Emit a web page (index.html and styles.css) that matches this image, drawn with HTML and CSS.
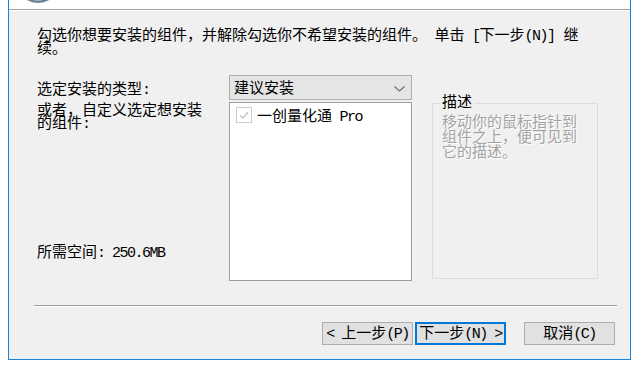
FILE: index.html
```html
<!DOCTYPE html>
<html lang="zh-CN">
<head>
    <meta charset="UTF-8">
    <title>选择组件</title>
    <link rel="stylesheet" href="styles.css">
</head>
<body>

<div class="window">
    <!-- Header strip (mostly cut off) -->
    <div class="header">
        <svg class="logo" width="32" height="4" viewBox="0 0 32 4">
            <ellipse cx="16" cy="-6" rx="15" ry="9" fill="#6d7f92"/>
            <ellipse cx="16" cy="-7" rx="11" ry="8" fill="#9db3c9"/>
        </svg>
    </div>

    <div class="page">
        <p class="intro">勾选你想要安装的组件，并解除勾选你不希望安装的组件。<span class="en"> </span>单击<span class="en"> [</span>下一步<span class="en">(N)]</span> 继<br>续。</p>

        <div class="components">
            <div class="label type-label">选定安装的类型<span class="en">:</span></div>
            <div class="combo">
                <span>建议安装</span>
                <svg class="chevron" width="11" height="6" viewBox="0 0 11 6">
                    <path d="M0.5 0.5 L5.5 5 L10.5 0.5" fill="none" stroke="#6f6f6f" stroke-width="1.2"/>
                </svg>
            </div>

            <div class="left-col">
                <div class="label tight">或者，自定义选定想安装<br>的组件<span class="en">:</span></div>
                <div class="label space">所需空间<span class="en">: 250.6MB</span></div>
            </div>
            <div class="listbox">
                <div class="item">
                    <span class="check">
                        <svg width="12" height="12" viewBox="0 0 12 12">
                            <path d="M2 6.5 L5 9 L10 3" fill="none" stroke="#c4c4c4" stroke-width="1.4"/>
                        </svg>
                    </span>
                    <span class="item-text">一创量化通<span class="en"> Pro</span></span>
                </div>
            </div>

            <fieldset class="desc-box">
                <legend>描述</legend>
                <p class="desc">移动你的鼠标指针到组件之上，便可见到它的描述。</p>
            </fieldset>
        </div>

        <div class="separator"></div>

        <div class="buttons">
            <div class="btn"><span class="en">&lt; </span>上一步<span class="en">(P)</span></div>
            <div class="btn btn-default">下一步<span class="en">(N) &gt;</span></div>
            <div class="btn btn-cancel">取消<span class="en">(C)</span></div>
        </div>
    </div>
</div>

</body>
</html>
```

FILE: styles.css
```css
body {
    margin: 0;
    background: #fff;
    font-family: "Liberation Mono", "Noto Sans CJK SC", monospace;
    font-size: 15px;
    line-height: 15px;
    color: #000;
}

/* half-width latin, like the dialog's bitmap font */
.en {
    letter-spacing: -1.5px;
}

.window {
    box-sizing: border-box;
    margin-left: 8px;
    width: 623px;
    height: 360px;
    border: 1px solid #1883d7;
    border-top: none;
    display: flex;
    flex-direction: column;
}

.header {
    height: 9px;
    background: #fff;
    border-bottom: 1px solid #a0a0a0;
    overflow: hidden;
}

.logo {
    display: block;
    margin-left: 13px;
}

.page {
    flex: 1;
    background: #f0f0f0;
    border-top: 1px solid #fff;
    padding-left: 28px;
}

.intro {
    margin: 19px 0 0;
    line-height: 13px;
}

/* three columns: labels, list, description */
.components {
    display: grid;
    grid-template-columns: 192px 183px 186px;
    grid-template-rows: 25px 179px;
    row-gap: 2px;
    margin-top: 19px;
}

.type-label {
    padding-top: 8px;
}

.combo {
    box-sizing: border-box;
    display: flex;
    justify-content: space-between;
    align-items: flex-start;
    padding: 6px 0 0 4px;
    background: #e5e5e5;
    border: 1px solid #adadad;
}

.chevron {
    margin: 4px 6px 0 0;
}

.left-col {
    display: flex;
    flex-direction: column;
    justify-content: space-between;
    padding: 3px 0 20px;
}

.tight {
    line-height: 13px;
}

.listbox {
    box-sizing: border-box;
    background: #fff;
    border: 1px solid #9d9d9d;
    padding: 4px 6px;
}

.item {
    display: flex;
    align-items: flex-start;
    gap: 5px;
}

.check {
    box-sizing: border-box;
    width: 16px;
    height: 16px;
    border: 1px solid #cccccc;
    background: #fff;
    display: flex;
    align-items: center;
    justify-content: center;
}

.item-text {
    margin-top: 3px;
}

.desc-box {
    grid-column: 3;
    grid-row: 1 / 3;
    margin: 21px 0 2px 20px;
    padding: 0 0 0 7px;
    border: 1px solid #dcdcdc;
    min-width: 0;
}

.desc-box legend {
    padding: 0 2px;
}

.desc {
    margin: 5px 0 0 2px;
    width: 140px;
    color: #a3a3a3;
    text-shadow: 1px 1px 0 #fff;
}

.separator {
    margin: 24px 0 0 -3px;
    width: 583px;
    border-top: 1px solid #a0a0a0;
    border-bottom: 1px solid #fff;
}

.buttons {
    display: flex;
    justify-content: flex-end;
    margin: 15px 15px 0 0;
}

.btn {
    box-sizing: border-box;
    width: 91px;
    height: 23px;
    padding-top: 4px;
    text-align: center;
    white-space: nowrap;
    background: #e1e1e1;
    border: 1px solid #adadad;
}

.btn-default {
    margin-left: 2px;
    border-color: #0078d7;
    box-shadow: inset 0 0 0 1px #0078d7;
}

.btn-cancel {
    margin-left: 18px;
}
```
